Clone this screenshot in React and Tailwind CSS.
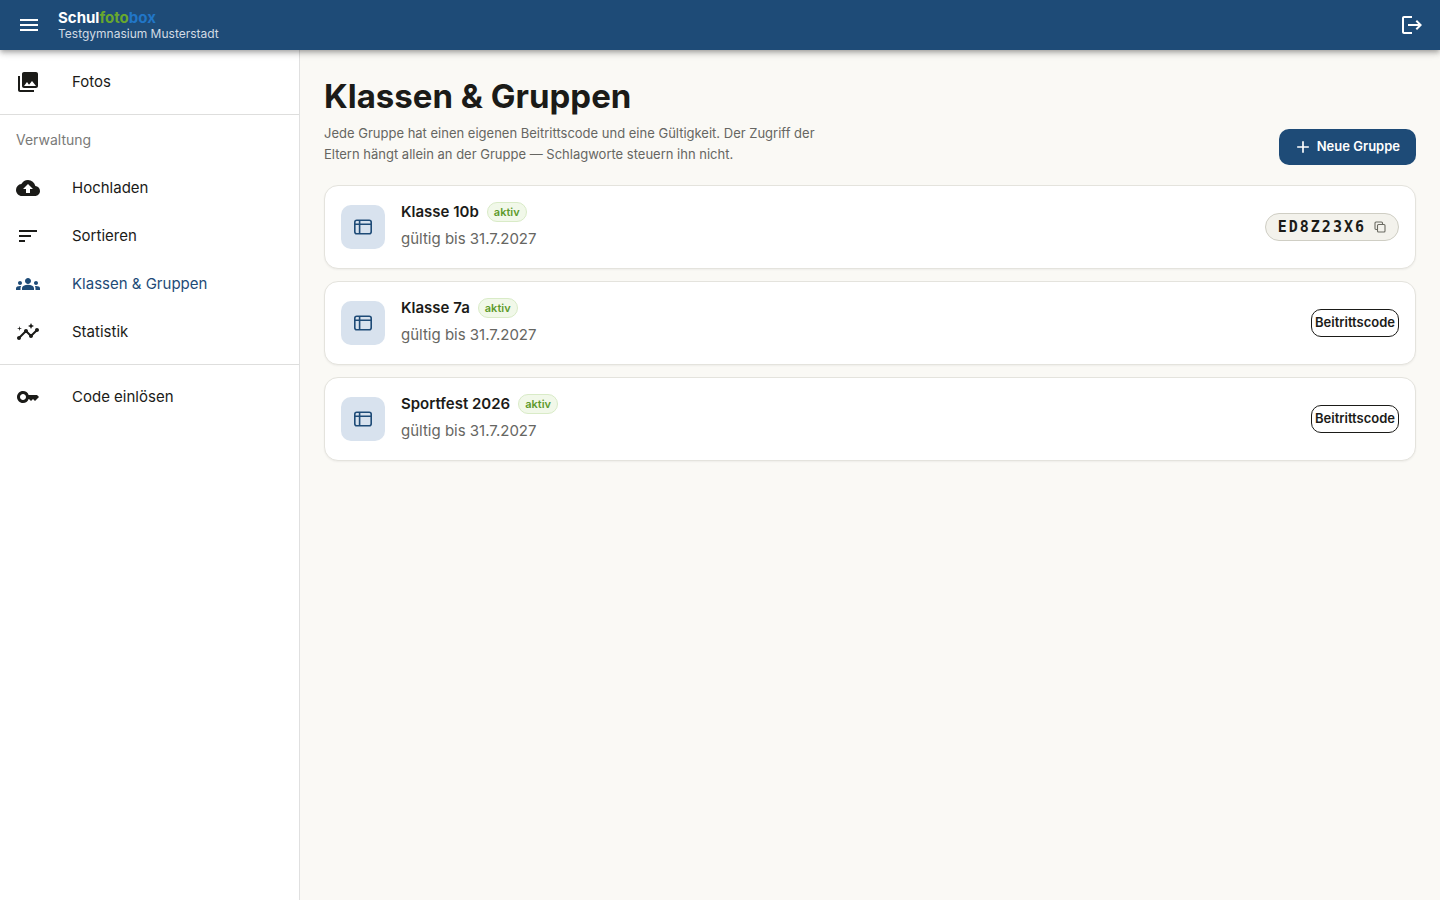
import React from 'react'
import { MdMenu, MdLogout, MdPhotoLibrary, MdBackup, MdSort, MdGroups, MdInsights, MdKey, MdAdd } from 'react-icons/md'

const groups = [
  { id: 1, name: 'Klasse 10b', validUntil: '31.7.2027', code: 'ED8Z23X6' },
  { id: 2, name: 'Klasse 7a', validUntil: '31.7.2027', code: null },
  { id: 3, name: 'Sportfest 2026', validUntil: '31.7.2027', code: null },
]

const adminItems = [
  { label: 'Hochladen', icon: MdBackup },
  { label: 'Sortieren', icon: MdSort },
  { label: 'Klassen & Gruppen', icon: MdGroups, active: true },
  { label: 'Statistik', icon: MdInsights },
]

function GroupIcon() {
  return (
    <svg width="20" height="20" viewBox="0 0 20 20" fill="none" stroke="currentColor" strokeWidth="1.6" aria-hidden="true">
      <rect x="1.8" y="3.3" width="16.4" height="13.4" rx="2" />
      <path d="M1.8 7.3h16.4M6.6 3.3v13.4" />
    </svg>
  )
}

function CopyIcon() {
  return (
    <svg width="12" height="12" viewBox="0 0 12 12" fill="none" stroke="currentColor" strokeWidth="1.1" aria-hidden="true">
      <rect x="3.5" y="3.5" width="7.5" height="7.5" rx="1" />
      <path d="M3.5 8.5H2a1 1 0 0 1-1-1V2a1 1 0 0 1 1-1h5.5a1 1 0 0 1 1 1v1.5" />
    </svg>
  )
}

function NavItem({ label, icon: Icon, active }) {
  return (
    <a
      href="#"
      aria-current={active ? 'page' : undefined}
      className={`flex h-12 items-center gap-8 px-4 text-[15px] ${active ? 'text-[#1e4b77]' : 'text-[#1b1b18]'}`}
    >
      <Icon size={24} />
      <span>{label}</span>
    </a>
  )
}

function Header() {
  return (
    <header className="relative z-10 flex h-[50px] items-center justify-between bg-[#1e4b77] px-4 text-white shadow-[0_2px_4px_-1px_rgba(0,0,0,0.2),0_4px_5px_rgba(0,0,0,0.14),0_1px_10px_rgba(0,0,0,0.12)]">
      <div className="flex items-center gap-4">
        <button type="button" aria-label="Menü" className="flex w-[26px] justify-center">
          <MdMenu size={24} />
        </button>
        <div className="pt-0.5">
          <div className="text-[15px] leading-4 font-bold">
            Schul<span className="text-[#68a82e]">foto</span><span className="text-[#2176c7]">box</span>
          </div>
          <div className="text-[12px] leading-4 text-[#d2dbe4]">Testgymnasium Musterstadt</div>
        </div>
      </div>
      <button type="button" aria-label="Abmelden">
        <MdLogout size={24} />
      </button>
    </header>
  )
}

function Sidebar() {
  return (
    <aside className="w-[300px] shrink-0 border-r border-[#e0e0e0] bg-white">
      <nav>
        <div className="border-b border-[#dededd] py-2">
          <NavItem label="Fotos" icon={MdPhotoLibrary} />
        </div>
        <div className="border-b border-[#dededd] pb-2">
          <h2 className="px-4 text-[14px] leading-[49px] text-[#7a7a78]">Verwaltung</h2>
          {adminItems.map(item => (
            <NavItem key={item.label} {...item} />
          ))}
        </div>
        <div className="py-2">
          <NavItem label="Code einlösen" icon={MdKey} />
        </div>
      </nav>
    </aside>
  )
}

function GroupCard({ group }) {
  return (
    <li className="flex items-center gap-4 rounded-[14px] border border-[#e4e3dd] bg-white p-4 shadow-[0_1px_2px_rgba(0,0,0,0.05)]">
      <div className="flex size-11 shrink-0 items-center justify-center rounded-[10px] bg-[#d8e2ee] text-[#1e4b77]">
        <GroupIcon />
      </div>
      <div className="min-w-0 flex-1">
        <div className="flex h-5 items-center gap-2">
          <h2 className="text-[15px] font-semibold">{group.name}</h2>
          <span className="flex h-5 items-center rounded-full border border-[#d9ebc7] bg-[#f1f8e9] px-1.5 text-[11px] font-semibold text-[#5d9a2c]">aktiv</span>
        </div>
        <p className="mt-1 text-[15px] leading-[26px] text-[#666662]">gültig bis {group.validUntil}</p>
      </div>
      {group.code ? (
        <button type="button" className="flex h-7 items-center gap-2 rounded-full border border-[#cfcec4] bg-[#f3f2ec] px-3 text-[#6b6b62]">
          <span className="font-['DejaVu_Sans_Mono',monospace] text-[15px] font-bold tracking-[2px] text-[#1b1b18]">{group.code}</span>
          <CopyIcon />
        </button>
      ) : (
        <button type="button" className="h-7 rounded-[10px] border border-[#1b1b18] px-[3px] text-[13px] font-semibold">
          Beitrittscode
        </button>
      )}
    </li>
  )
}

function App() {
  return (
    <div className="flex min-h-screen flex-col bg-[#faf9f5] font-['Inter',sans-serif] text-[#1b1b18]">
      <Header />
      <div className="flex flex-1">
        <Sidebar />
        <main className="min-w-0 flex-1 p-6">
          <div className="mb-5 flex items-end justify-between gap-4">
            <div>
              <h1 className="text-[33px] leading-[45px] font-bold">Klassen &amp; Gruppen</h1>
              <p className="mt-1 max-w-[520px] text-[13px] leading-[21px] text-[#666662]">
                Jede Gruppe hat einen eigenen Beitrittscode und eine Gültigkeit. Der Zugriff der Eltern hängt allein an der Gruppe — Schlagworte steuern ihn nicht.
              </p>
            </div>
            <button type="button" className="flex h-9 shrink-0 items-center gap-1 rounded-[10px] bg-[#1e4b77] pr-4 pl-3.5 text-[13px] font-semibold text-white">
              <MdAdd size={20} />
              Neue Gruppe
            </button>
          </div>

          <ul className="space-y-3">
            {groups.map(group => (
              <GroupCard key={group.id} group={group} />
            ))}
          </ul>
        </main>
      </div>
    </div>
  )
}

export default App
